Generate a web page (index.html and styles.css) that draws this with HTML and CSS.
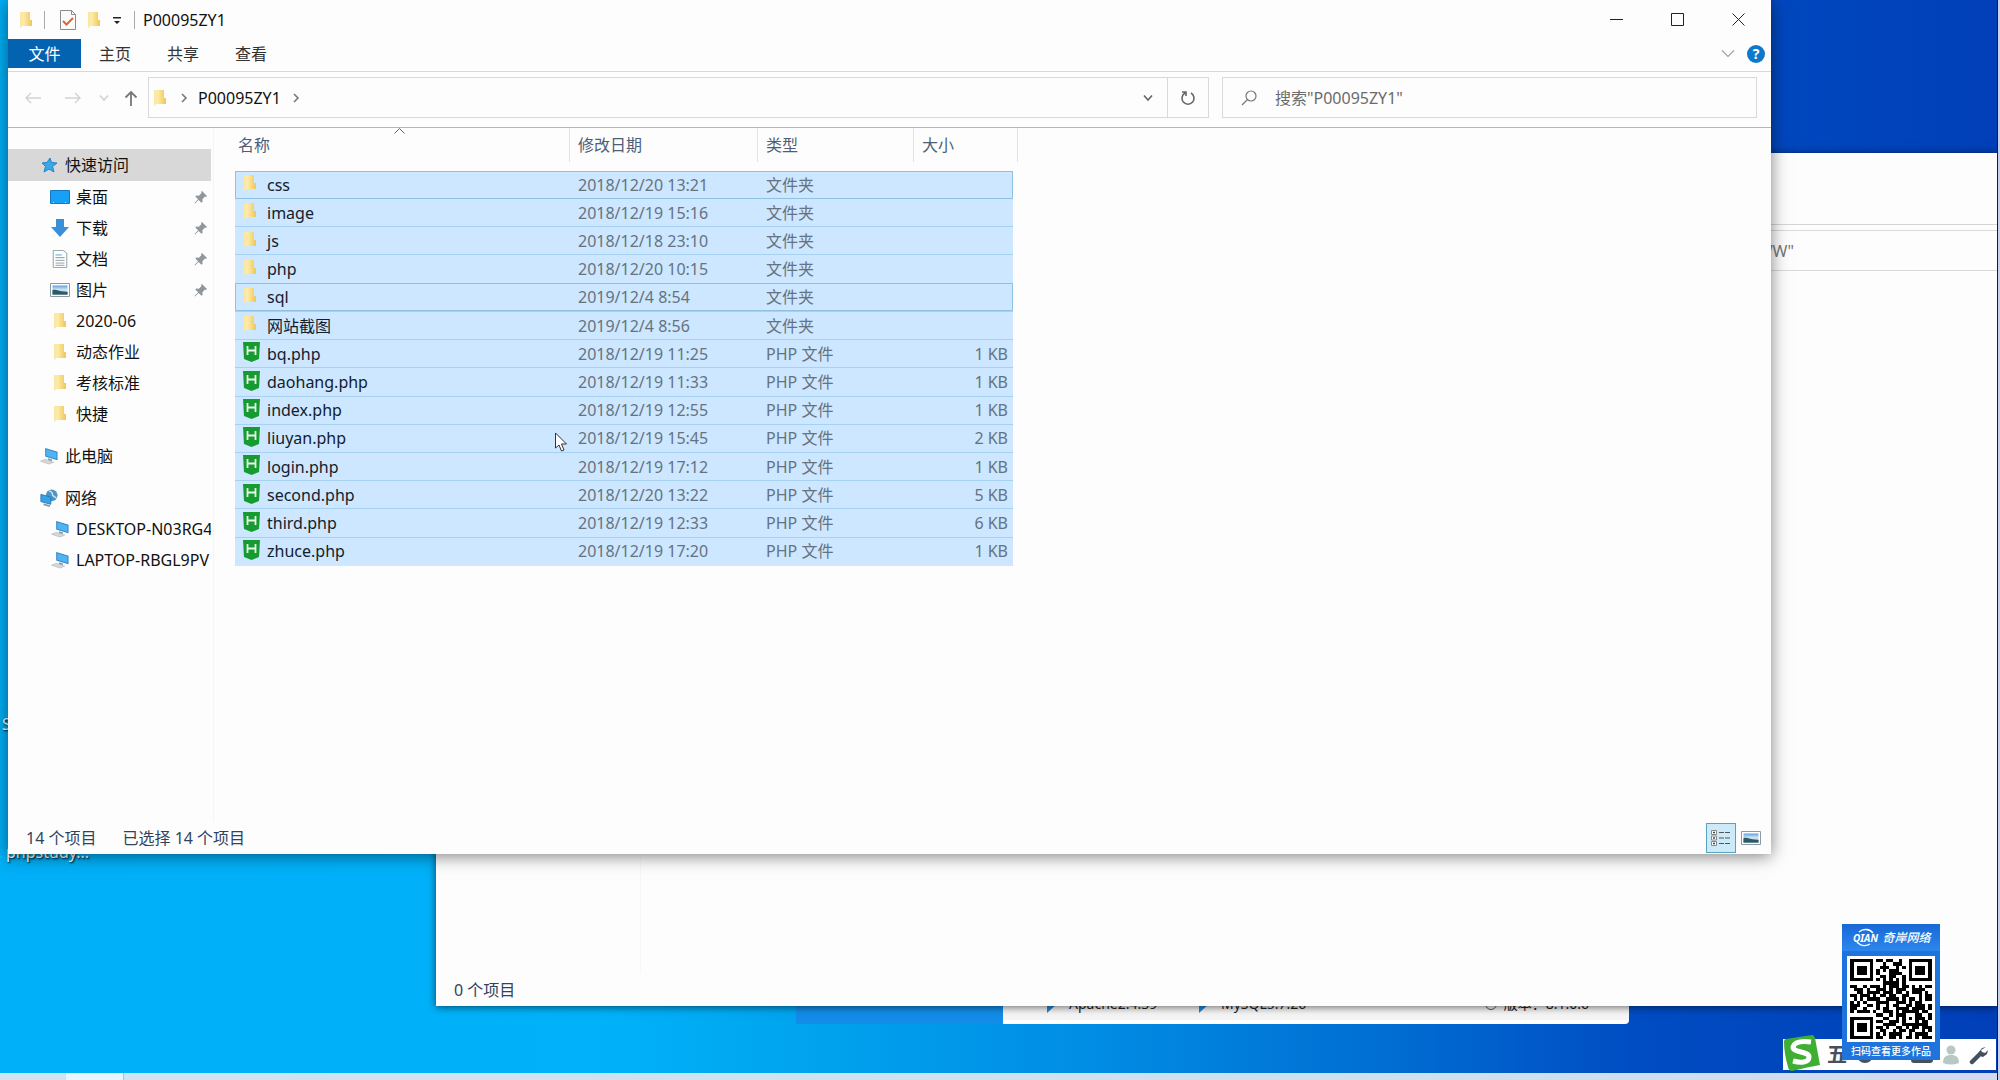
FILE: index.html
```html
<!DOCTYPE html>
<html lang="zh-CN">
<head>
<meta charset="utf-8">
<title>P00095ZY1</title>
<link rel="stylesheet" href="styles.css">
</head>
<body>
<svg class="defs" aria-hidden="true">
  <defs>
    <linearGradient id="gold" x1="0" x2="1" y1="0" y2="0"><stop offset="0" stop-color="#fdeeb0"/><stop offset=".45" stop-color="#f9dc85"/><stop offset="1" stop-color="#eec55c"/></linearGradient>
    <linearGradient id="sky" x1="0" x2="0" y1="0" y2="1"><stop offset="0" stop-color="#5f9fe0"/><stop offset=".5" stop-color="#d8ecf6"/><stop offset="1" stop-color="#3f7590"/></linearGradient>
    <symbol id="folder" viewBox="0 0 14 18"><path d="M1 1h9v13l-7 1-1 2-1-1z" fill="#fbe8a6"/><path d="M4 2l2-1h5v8h2v6H4z" fill="url(#gold)"/></symbol>
    <symbol id="pin" viewBox="0 0 14 14"><path d="M8 1l5 5-1 1-1-.4-2.600 2.600.2 2.600-1.100 1-2.900-2.900L1 13.500.5 13l3.600-3.700L1.300 6.500l1-1 2.600.2 2.600-2.600L7 2z" fill="#8f969c"/></symbol>
    <symbol id="pc" viewBox="0 0 20 19"><path d="M6 1l13 4v9L6 10z" fill="#2f83c4"/><path d="M7 2.500l11 3.300v6.800L7 9.300z" fill="#4fb4f4"/><path d="M9 12l4 1v2l-4-1z" fill="#8b98a3"/><path d="M1 15l5-2 9 3-5 2z" fill="#d3d8dc" stroke="#aab2b8" stroke-width=".6"/></symbol>
    <symbol id="photo" viewBox="0 0 20 14"><path d="M.5.500h19v13H.5z" fill="#fff" stroke="#8c9aa5"/><path d="M2.500 2.500h15v9h-15z" fill="url(#sky)"/><path d="M2.500 7c4-1 7 2 15 2v2.500h-15z" fill="#2e5a63"/></symbol>
    <symbol id="hb" viewBox="0 0 17 20"><path d="M0 0h17l-1 17-7.500 3L1 17z" fill="#169b30"/><path d="M4.500 4v9M12.500 4v9M4.500 8.500h8" stroke="#e9f8ea" stroke-width="1.800" fill="none"/></symbol>
    <symbol id="down" viewBox="0 0 10 8"><path d="M1 1.500l4 4.500 4-4.500" fill="none" stroke="currentColor" stroke-width="1.600"/></symbol>
    <symbol id="next" viewBox="0 0 8 10"><path d="M2 1l4 4-4 4" fill="none" stroke="currentColor" stroke-width="1.600"/></symbol>
  </defs>
</svg>

<main class="desktop">
  <span class="label label-s">S</span>
  <span class="label label-php">phpstudy...</span>

  <section class="panel">
    <div class="panel-side"></div>
    <div class="panel-main">
      <span class="svc"><i class="play"></i>Apache2.4.39</span>
      <span class="svc svc-db"><i class="play"></i>MySQL5.7.26</span>
      <span class="ver"><i class="info"></i>版本：8.1.0.6</span>
    </div>
  </section>

  <section class="window back">
    <div class="back-ribbon"></div>
    <div class="back-address"><span>搜索"WWW"</span></div>
    <div class="back-body"></div>
    <footer class="status"><span>0 个项目</span></footer>
  </section>

  <div class="ime">
    <svg class="ime-logo" viewBox="0 0 38 38"><path d="M3 5Q16 3 29 1q2 0 3 3l5 27q-12 2-28 6-3 0-4-4Q1 19 1 8q0-3 2-3z" fill="#3fae33"/><path d="M28 8q-16-2-18 5c0 6 16 4 16 10 0 6-9 6-16 4" fill="none" stroke="#fff" stroke-width="5"/></svg>
    <span class="ime-mode">五</span>
    <svg class="ime-moon" viewBox="0 0 16 16"><circle cx="8" cy="8" r="8" fill="#45505f"/></svg>
    <svg class="ime-key" viewBox="0 0 22 16"><rect width="22" height="16" rx="3" fill="#45505f"/></svg>
    <svg class="ime-user" viewBox="0 0 18 20"><circle cx="9" cy="5" r="4.500" fill="#b9c8c4"/><path d="M1 18c0-6 3-8 8-8s8 2 8 8q-8 3-16 0z" fill="#b9c8c4"/></svg>
    <svg class="ime-tool" viewBox="0 0 20 20"><path d="M3 17L11 9" stroke="#45505f" stroke-width="4.500" stroke-linecap="round"/><path d="M17 2l-4 1-3 4 1 4 3 1 4-3 1-4-3 3-3-1-1-2z" fill="#45505f"/></svg>
  </div>
  <div class="taskbar"><span class="task"></span></div>
  <div class="edge"></div>

  <section class="window front">
    <header class="title">
      <svg class="i-folder"><use href="#folder"/></svg>
      <i class="sep"></i>
      <svg class="i-check" viewBox="0 0 16 20"><path d="M.5.500h11l4 4v15H.5z" fill="#fafafa" stroke="#8c8c8c"/><path d="M11.500.500v4h4" fill="none" stroke="#8c8c8c"/><path d="M3 11l3.500 3.500L13 8" fill="none" stroke="#e0663a" stroke-width="2"/></svg>
      <svg class="i-folder i-new"><use href="#folder"/></svg>
      <svg class="i-custom" viewBox="0 0 8 8"><path d="M0 0h8v1.500H0zM1 4h6L4 7z" fill="#222"/></svg>
      <i class="sep"></i>
      <h1>P00095ZY1</h1>
      <div class="controls">
        <button type="button" aria-label="最小化"><svg viewBox="0 0 13 13"><path d="M0 6.500h13" stroke="#222" fill="none"/></svg></button>
        <button type="button" aria-label="最大化"><svg viewBox="0 0 13 13"><path d="M.5.500h12v12H.5z" stroke="#222" fill="none"/></svg></button>
        <button type="button" aria-label="关闭"><svg viewBox="0 0 13 13"><path d="M.5.500l12 12M12.500.500l-12 12" stroke="#222" fill="none"/></svg></button>
      </div>
    </header>
    <nav class="tabs">
      <button type="button" class="active">文件</button>
      <button type="button">主页</button>
      <button type="button">共享</button>
      <button type="button">查看</button>
      <div class="help">
        <svg class="i-fold" viewBox="0 0 14 9"><path d="M1 1.500l6 6 6-6" stroke="#a0a0a0" stroke-width="1.200" fill="none"/></svg>
        <button type="button" class="help-btn" aria-label="帮助">?</button>
      </div>
    </nav>
    <div class="address-row">
      <div class="history">
        <svg class="arrow" viewBox="0 0 16 12"><path d="M16 6H1M6 1L1 6l5 5" stroke="#d2d2d2" stroke-width="1.400" fill="none"/></svg>
        <svg class="arrow" viewBox="0 0 16 12"><path d="M0 6h15M10 1l5 5-5 5" stroke="#d2d2d2" stroke-width="1.400" fill="none"/></svg>
        <svg class="i-down pale"><use href="#down"/></svg>
        <svg class="i-up" viewBox="0 0 14 16"><path d="M7 16V2M1.500 7.500L7 2l5.500 5.500" stroke="#777" stroke-width="1.800" fill="none"/></svg>
      </div>
      <div class="address">
        <svg class="i-folder"><use href="#folder"/></svg>
        <svg class="i-next"><use href="#next"/></svg>
        <a href="#">P00095ZY1</a>
        <svg class="i-next"><use href="#next"/></svg>
        <svg class="i-down"><use href="#down"/></svg>
        <button type="button" class="refresh" aria-label="刷新"><svg viewBox="0 0 16 16"><path d="M5 3a6 6 0 1 0 6 0M2 2h4v4" stroke="#666" stroke-width="1.600" fill="none"/></svg></button>
      </div>
      <label class="search">
        <svg viewBox="0 0 16 16"><circle cx="10" cy="6" r="5" stroke="#777" stroke-width="1.200" fill="none"/><path d="M6.500 9.500L1 15" stroke="#777" stroke-width="1.200"/></svg>
        <input type="text" placeholder='搜索"P00095ZY1"' aria-label="搜索">
      </label>
    </div>
    <div class="body">
      <aside class="tree">
        <a href="#" class="root current"><svg viewBox="0 0 20 18"><path d="M11 2l1.500 4.500 5.500.5-4.500 3.500 1.500 5.500-5-3L5 16l1.500-5.500L3 7l5-.5z" fill="#38a9e8" stroke="#2382c0"/></svg>快速访问</a>
        <a href="#"><svg viewBox="0 0 20 14"><path d="M.5.500h19v13H.5z" fill="#18a0f6" stroke="#1478c0"/><path d="M3 12.500h13" stroke="#bfe4ff" stroke-dasharray="1 11"/></svg>桌面<svg class="pin"><use href="#pin"/></svg></a>
        <a href="#"><svg viewBox="0 0 20 18"><path d="M6 0h8v8h5l-9 10L1 8h5z" fill="#3a8fdb"/></svg>下载<svg class="pin"><use href="#pin"/></svg></a>
        <a href="#"><svg viewBox="0 0 20 20"><path d="M2.500.500h11l4 3v16h-15z" fill="#fff" stroke="#8d979e"/><path d="M5 5.500h7M5 8.500h10" stroke="#3aa0c8"/><path d="M5 11.500h10M5 14.500h10M5 17h10" stroke="#8a959c"/></svg>文档<svg class="pin"><use href="#pin"/></svg></a>
        <a href="#"><svg><use href="#photo"/></svg>图片<svg class="pin"><use href="#pin"/></svg></a>
        <a href="#"><svg><use href="#folder"/></svg>2020-06</a>
        <a href="#"><svg><use href="#folder"/></svg>动态作业</a>
        <a href="#"><svg><use href="#folder"/></svg>考核标准</a>
        <a href="#"><svg><use href="#folder"/></svg>快捷</a>
        <a href="#" class="root"><svg><use href="#pc"/></svg>此电脑</a>
        <a href="#" class="root"><svg viewBox="0 0 20 20"><circle cx="13" cy="7" r="6.500" fill="#4f94c4"/><path d="M10 2q4 1 4 5l4 3" stroke="#cfe8f6" stroke-width="1.500" fill="none"/><path d="M1 6l11 3v8L1 14z" fill="#35a3ea" stroke="#2876b4"/><path d="M4 17l7 2" stroke="#8b98a3" stroke-width="2"/></svg>网络</a>
        <a href="#"><svg><use href="#pc"/></svg>DESKTOP-N03RG48</a>
        <a href="#"><svg><use href="#pc"/></svg>LAPTOP-RBGL9PV</a>
      </aside>
      <div class="files">
        <svg class="sort" viewBox="0 0 11 6"><path d="M.5 5.500l5-5 5 5" stroke="#666" fill="none"/></svg>
        <table>
          <thead><tr><th class="c-name"><span>名称</span></th><th class="c-date"><span>修改日期</span></th><th class="c-type"><span>类型</span></th><th class="c-size"><span>大小</span></th></tr></thead>
          <tbody>
            <tr class="focus"><td><svg class="f"><use href="#folder"/></svg>css</td><td>2018/12/20 13:21</td><td>文件夹</td><td></td></tr>
            <tr><td><svg class="f"><use href="#folder"/></svg>image</td><td>2018/12/19 15:16</td><td>文件夹</td><td></td></tr>
            <tr><td><svg class="f"><use href="#folder"/></svg>js</td><td>2018/12/18 23:10</td><td>文件夹</td><td></td></tr>
            <tr><td><svg class="f"><use href="#folder"/></svg>php</td><td>2018/12/20 10:15</td><td>文件夹</td><td></td></tr>
            <tr class="focus"><td><svg class="f"><use href="#folder"/></svg>sql</td><td>2019/12/4 8:54</td><td>文件夹</td><td></td></tr>
            <tr><td><svg class="f"><use href="#folder"/></svg>网站截图</td><td>2019/12/4 8:56</td><td>文件夹</td><td></td></tr>
            <tr><td><svg class="h"><use href="#hb"/></svg>bq.php</td><td>2018/12/19 11:25</td><td>PHP 文件</td><td>1 KB</td></tr>
            <tr><td><svg class="h"><use href="#hb"/></svg>daohang.php</td><td>2018/12/19 11:33</td><td>PHP 文件</td><td>1 KB</td></tr>
            <tr><td><svg class="h"><use href="#hb"/></svg>index.php</td><td>2018/12/19 12:55</td><td>PHP 文件</td><td>1 KB</td></tr>
            <tr><td><svg class="h"><use href="#hb"/></svg>liuyan.php</td><td>2018/12/19 15:45</td><td>PHP 文件</td><td>2 KB</td></tr>
            <tr><td><svg class="h"><use href="#hb"/></svg>login.php</td><td>2018/12/19 17:12</td><td>PHP 文件</td><td>1 KB</td></tr>
            <tr><td><svg class="h"><use href="#hb"/></svg>second.php</td><td>2018/12/20 13:22</td><td>PHP 文件</td><td>5 KB</td></tr>
            <tr><td><svg class="h"><use href="#hb"/></svg>third.php</td><td>2018/12/19 12:33</td><td>PHP 文件</td><td>6 KB</td></tr>
            <tr><td><svg class="h"><use href="#hb"/></svg>zhuce.php</td><td>2018/12/19 17:20</td><td>PHP 文件</td><td>1 KB</td></tr>
          </tbody>
        </table>
      </div>
    </div>
    <footer class="status">
      <span>14 个项目</span><span>已选择 14 个项目</span>
      <div class="views">
        <button type="button" class="on" aria-label="详细信息"><svg viewBox="0 0 20 18"><path d="M.5 1.500h5v4h-5zM.5 7h5v4h-5zM.5 12.500h5v4h-5z" fill="#fff" stroke="#888"/><path d="M2 3.500h2M2 9h2M2 14.500h2" stroke="#444" stroke-width="1.500"/><path d="M8 3.500h12M8 9h12M8 14.500h12" stroke="#555" stroke-dasharray="5 1"/></svg></button>
        <button type="button" aria-label="大图标"><svg><use href="#photo"/></svg></button>
      </div>
    </footer>
  </section>

  <svg class="cursor" viewBox="0 0 13 20"><path d="M.5 1v15l3.500-3 2.500 6 2.500-1-2.500-6h5z" fill="#fff" stroke="#333"/></svg>

  <aside class="promo">
    <div class="promo-head">
      <span class="qian"><svg viewBox="0 0 26 20"><path d="M7 4a9 8 0 0 1 14 1M18 16a9 8 0 0 1-12-1" fill="none" stroke="#fff" stroke-width="1.300"/></svg><b>QIAN</b></span>
      <b class="brand">奇岸网络</b>
    </div>
    <svg class="qr" viewBox="-1 -1 27 27" preserveAspectRatio="none" shape-rendering="crispEdges"><path id="qr-dots"/></svg>
    <p>扫码查看更多作品</p>
  </aside>
</main>
<script src="qr.js"></script>
</body>
</html>
```
FILE: qr.js
```js
// One string per row of the code; "#" is a dark module.
const rows = [
  "#######.##.##..#..#######",
  "#.....#...#..###..#.....#",
  "#.###.#..###..#.#.#.###.#",
  "#.###.#.#.#.###...#.###.#",
  "#.###.#.#...####..#.###.#",
  "#.....#..##.##..#.#.....#",
  "#######.#.#.#.#.#.#######",
  "..........#####.#........",
  "##..#.###.#.###.##.#.#.##",
  ".###.#..###.#.###..####..",
  "..##.####.###.##.#.###.#.",
  "##.###.#.##.##..##...#.##",
  ".#.#.####..####.#.##.#.##",
  "#.#.#...####..###.#.##...",
  "###..##.#..#.##..##.###.#",
  "##..#...#.##..####.####.#",
  "#.####.#..###.#.#####.##.",
  "........##..#.###...##..#",
  "#######...##..#.#.#.###.#",
  "#.....#.##..###.#...#.##.",
  "#.###.#...####..########.",
  "#.###.#.##.#..##.#.##.###",
  "#.###.#..##..#.##.##..#.#",
  "#.....#.#.#.####..#.####.",
  "#######.##..##.#.##.#.###"
];
let d = "";
rows.forEach((row, y) => {
  [...row].forEach((c, x) => { if (c === "#") d += `M${x} ${y}h1v1h-1z`; });
});
document.getElementById("qr-dots").setAttribute("d", d);
```
FILE: styles.css
```css
* { box-sizing: border-box; }
body { margin: 0; font: 16px/20px "Noto Sans", "Noto Sans CJK SC", sans-serif; color: #111; }
button { border: 0; padding: 0; background: none; font: inherit; color: inherit; }
a { color: inherit; text-decoration: none; }
svg { flex: none; display: block; }
.defs { position: absolute; width: 0; height: 0; }

.desktop {
  position: relative; height: 100vh; overflow: hidden;
  background: linear-gradient(90deg, #00b0f8 0, #00b2fa 30%, #00a7f0 38%, #008ce4 55%, #006cd2 70%, #004cc2 82%, #003fb8 100%);
}
.label { position: absolute; color: #fff; text-shadow: 1px 1px 2px #000; }
.label-s { left: 2px; top: 714px; }
.label-php { left: 6px; top: 842px; }

.window { position: absolute; display: flex; flex-direction: column; background: #fdfdfd; }
.front { left: 8px; right: 229px; top: 0; bottom: 226px; box-shadow: 0 2px 16px rgba(0, 0, 0, .5); }
.back { left: 436px; right: 3px; top: 153px; bottom: 74px; box-shadow: 0 1px 8px rgba(0, 0, 0, .6); }

.back-ribbon { height: 72px; border-bottom: 1px solid #d5d5d5; }
.back-address { height: 41px; margin-top: 5px; border: solid #d9d9d9; border-width: 1px 0; display: flex; justify-content: flex-end; align-items: center; padding-right: 203px; color: #777; }
.back-body { flex: 1; width: 205px; border-right: 1px solid #f7f7f7; }
.status { display: flex; align-items: center; height: 32px; gap: 26px; padding-left: 18px; color: #31435c; }

.title { display: flex; align-items: center; height: 39px; padding-left: 11px; }
.title h1 { margin: 0 0 0 8px; font-size: 16px; font-weight: 400; }
.sep { width: 1px; height: 18px; background: #aaa; }
.i-folder { width: 14px; height: 18px; }
.title .i-folder { margin-right: 11px; }
.i-check { width: 16px; height: 20px; margin: 0 11px 0 15px; }
.i-custom { width: 8px; height: 8px; margin: 2px 13px 0 1px; }
.controls { display: flex; margin-left: auto; padding-right: 2px; }
.controls button { width: 61px; height: 38px; display: grid; place-items: center; }
.controls svg { width: 13px; height: 13px; }

.tabs { display: flex; align-items: flex-start; height: 33px; border-bottom: 1px solid #d9d9d9; color: #333; }
.tabs > button { height: 29px; width: 68px; }
.tabs > .active { width: 73px; background: #0463b1; color: #fff; }
.help { display: flex; align-items: center; gap: 12px; margin-left: auto; height: 29px; padding-right: 6px; }
.i-fold { width: 14px; height: 9px; }
.help-btn { width: 18px; height: 18px; border-radius: 50%; background: #0c79cb; color: #fff; font-size: 14px; line-height: 18px; font-weight: 700; }

.address-row { display: flex; height: 56px; padding: 5px 14px 9px 0; border-bottom: 1px solid #b5b5b5; }
.history { width: 140px; display: flex; align-items: center; gap: 18px; padding-left: 17px; }
.arrow { width: 16px; height: 12px; margin-right: 6px; }
.i-down { width: 10px; height: 8px; color: #666; }
.pale { margin-left: -6px; color: #d2d2d2; }
.i-up { width: 14px; height: 16px; margin-left: -3px; }
.address { flex: 1; display: flex; align-items: center; border: 1px solid #d9d9d9; padding-left: 4px; }
.address .i-next { width: 8px; height: 10px; margin: 0 10px 0 13px; color: #777; }
.address .i-next + .i-down { margin-left: auto; margin-right: 14px; }
.address a + .i-next { margin-left: 11px; }
.refresh { width: 41px; align-self: stretch; border-left: 1px solid #d9d9d9; display: grid; place-items: center; }
.refresh svg { width: 16px; height: 16px; }
.search { flex: 0 1 535px; display: flex; align-items: center; gap: 18px; margin-left: 13px; padding-left: 18px; border: 1px solid #d9d9d9; }
.search svg { width: 16px; height: 16px; }
.search input { flex: 1; min-width: 0; border: 0; padding: 0; outline: 0; background: none; font: inherit; }
.search input::placeholder { color: #6b6b6b; opacity: 1; }

.body { flex: 1; display: flex; min-height: 0; }
.tree { width: 206px; padding: 21px 2px 0 0; border-right: 1px solid #f5f5f5; overflow: hidden; }
.tree a { display: flex; align-items: center; height: 31px; padding-left: 42px; white-space: nowrap; overflow: hidden; color: #111; }
.tree a > svg { width: 20px; height: 18px; margin-right: 6px; }
.tree a > .pin { width: 14px; height: 14px; margin: 0 3px 0 auto; }
.tree .root { padding-left: 31px; margin-top: 11px; }
.tree .current { height: 32px; margin-top: 0; background: #d8d8d8; }

.files { position: relative; flex: 1; padding-left: 21px; }
.sort { position: absolute; left: 180px; top: 0; width: 11px; height: 6px; }
table { width: 778px; height: 438px; table-layout: fixed; border-collapse: collapse; }
.c-name { width: 335px; }
.c-date { width: 188px; }
.c-type { width: 156px; }
th { height: 43px; padding: 0; vertical-align: top; font-weight: 400; text-align: left; color: #4c5f78; }
th span { display: block; height: 34px; line-height: 34px; padding-left: 8px; border-right: 1px solid #e2e2e2; }
.c-name span { padding-left: 3px; }
.c-size span { margin-right: -5px; }
tbody tr { background: #cce7ff; border-bottom: 1px solid #a6d1f2; }
tbody tr:last-child { border-bottom-color: #cce7ff; }
tbody .focus { outline: 1px solid #8fc2e2; outline-offset: -1px; }
td { padding: 0 8px; color: #66737f; }
td:first-child { color: #14202b; }
td:last-child { padding-right: 5px; text-align: right; }
td svg { display: inline-block; vertical-align: middle; }
.f { width: 14px; height: 18px; margin: -6px 10px 0 0; }
.h { width: 17px; height: 20px; margin: -6px 7px 0 0; }

.views { display: flex; margin-left: auto; margin-right: 5px; }
.views button { width: 30px; height: 30px; display: grid; place-items: center; }
.views .on { background: #cdeaf8; border: 1px solid #5aa3bd; }
.views svg { width: 20px; height: 14px; }
.views .on svg { height: 18px; }
.cursor { position: absolute; left: 555px; top: 432px; width: 13px; height: 20px; }

.panel { position: absolute; left: 796px; right: 371px; bottom: 56px; height: 40px; display: flex; font-size: 14px; color: #222; }
.panel-side { width: 207px; background: #128ce8; }
.panel-main { flex: 1; display: flex; align-items: center; padding: 4px 40px 0 44px; background: #f5f5f5; border-bottom: 4px solid #fff; border-radius: 0 0 4px 0; }
.svc, .ver { display: flex; align-items: center; }
.svc { width: 152px; }
.ver { margin-left: auto; }
.play { width: 0; height: 0; margin-right: 12px; border: solid transparent; border-width: 9px 0 9px 10px; border-left-color: #1e88d8; }
.info { width: 12px; height: 12px; margin-right: 7px; border: 1px solid #555; border-radius: 50%; }

.ime { position: absolute; right: 4px; bottom: 10px; width: 213px; height: 31px; display: flex; align-items: center; background: #fff; color: #45505f; }
.ime-logo { width: 38px; height: 38px; margin: -4px 6px 0 0; }
.ime-mode { font-size: 20px; font-weight: 700; width: 30px; }
.ime-moon { width: 16px; height: 16px; margin-right: 38px; }
.ime-key { width: 22px; height: 16px; margin-right: 9px; }
.ime-user { width: 18px; height: 20px; margin-right: 9px; }
.ime-tool { width: 20px; height: 20px; }
.taskbar { position: absolute; left: 0; right: 0; bottom: 0; height: 7px; padding-left: 66px; background: linear-gradient(90deg, #cde5f3, #cfdfee 80%, #d3d9ee); }
.task { display: block; width: 58px; height: 7px; background: #e8f5fc; border-right: 1px solid #a9c6d8; }
.edge { position: absolute; right: 0; top: 0; bottom: 0; width: 3px; background: #c9d2ee; border-left: 1px solid #061a5c; }

.promo { position: absolute; right: 60px; bottom: 20px; width: 98px; height: 136px; display: flex; flex-direction: column; background: #1f73dc; color: #fff; }
.promo-head { display: flex; align-items: center; justify-content: center; gap: 3px; height: 27px; background: linear-gradient(#1769d6, #2d86ee); font-style: italic; }
.qian { position: relative; width: 28px; font-size: 10px; line-height: 20px; text-align: center; }
.qian svg { position: absolute; left: 1px; top: 0; width: 26px; height: 20px; }
.brand { font-size: 12px; font-weight: 500; }
.qr { width: 88px; height: 86px; margin: 5px auto 0; background: #fff; }
.promo p { margin: 0; font-size: 10px; line-height: 18px; font-weight: 500; text-align: center; white-space: nowrap; }
```
